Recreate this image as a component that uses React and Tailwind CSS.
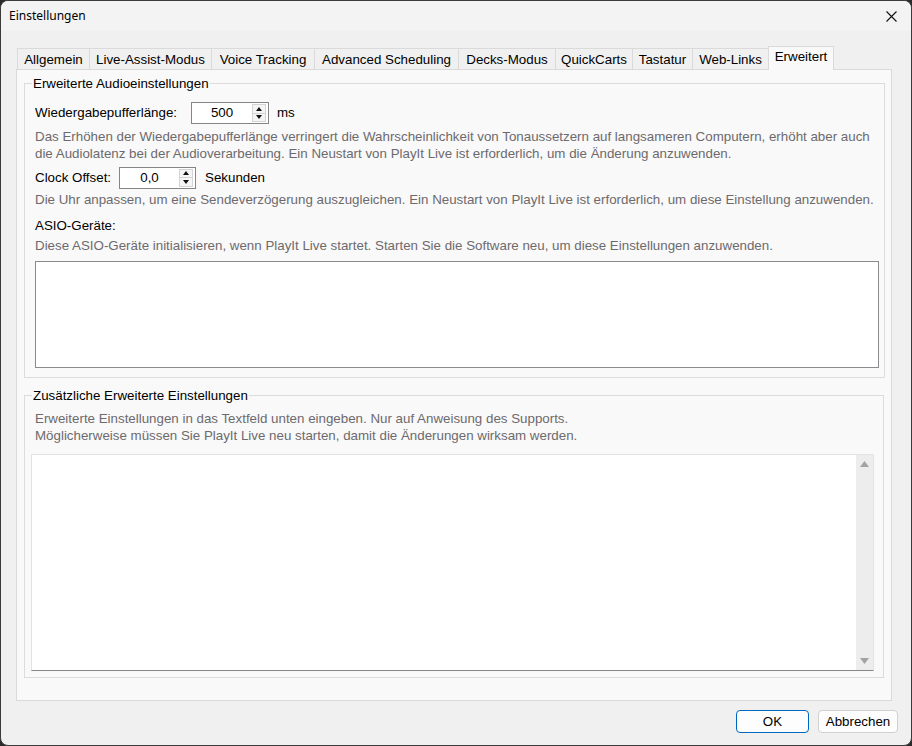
import React from "react";

const tabs = [
  { label: "Allgemein", w: "w-[73px]" },
  { label: "Live-Assist-Modus", w: "w-[123px]" },
  { label: "Voice Tracking", w: "w-[104px]" },
  { label: "Advanced Scheduling", w: "w-[145px]" },
  { label: "Decks-Modus", w: "w-[98px]" },
  { label: "QuickCarts", w: "w-[78px]" },
  { label: "Tastatur", w: "w-[61px]" },
  { label: "Web-Links", w: "w-[77px]" },
];

function SpinBox({ value, w }) {
  return (
    <div className={`${w} h-[22px] flex items-stretch border border-[#858585] bg-white`}>
      <div className="flex-1 flex items-center justify-center text-[13.33px] text-black leading-none">{value}</div>
      <div className="w-[16px] flex flex-col py-[1px] pr-[2px]">
        <div className="flex-1 flex items-center justify-center border border-[#d4d4d4] bg-[#f5f5f5]">
          <svg width="6" height="4" viewBox="0 0 6 4"><path d="M3 0 L6 4 L0 4 Z" fill="#111" /></svg>
        </div>
        <div className="flex-1 flex items-center justify-center border border-[#d4d4d4] border-t-0 bg-[#f5f5f5]">
          <svg width="6" height="4" viewBox="0 0 6 4"><path d="M0 0 L6 0 L3 4 Z" fill="#111" /></svg>
        </div>
      </div>
    </div>
  );
}

export default function App() {
  const font = { fontFamily: '"Liberation Sans", Arial, sans-serif' };
  return (
    <div className="w-[912px] h-[746px] bg-[#2b2b2b]">
      <div
        className="w-[912px] h-[746px] flex flex-col border border-[#3a3a3a] rounded-[8px] overflow-hidden bg-[#f0f0f0]"
        style={font}
      >
        {/* Title bar */}
        <div className="h-[30px] shrink-0 flex items-center justify-between bg-[#f3f3f3] pl-[8px] pr-[10px]">
          <span className="text-[12px] text-black" style={{ fontFamily: '"Noto Sans", "Open Sans", sans-serif' }}>
            Einstellungen
          </span>
          <svg width="11" height="11" viewBox="0 0 11 11" className="mr-[4px]">
            <path d="M0.5 0.5 L10.5 10.5 M10.5 0.5 L0.5 10.5" stroke="#111" strokeWidth="1.1" />
          </svg>
        </div>

        {/* Body */}
        <div className="flex-1 flex flex-col pt-[15px]">
          {/* Tabs */}
          <div className="flex items-end h-[23px] ml-[16px] relative z-10">
            {tabs.map((t, i) => (
              <div
                key={t.label}
                className={`${t.w} h-[21px] ${i > 0 ? "-ml-px" : ""} border border-b-0 border-[#dadada] bg-[#f0f0f0] flex items-center justify-center text-[13.33px] text-black whitespace-nowrap pt-[1px]`}
              >
                {t.label}
              </div>
            ))}
            <div className="w-[66px] h-[24px] -ml-px -mb-px border border-b-0 border-[#dadada] bg-[#f9f9f9] flex items-center justify-center text-[13.33px] text-black pb-[3px]">
              Erweitert
            </div>
          </div>

          {/* Panel */}
          <div className="ml-[15px] w-[876px] h-[632px] border border-[#dadada] bg-[#f9f9f9] px-[7px] pt-[6px]">
            {/* Group 1 */}
            <fieldset className="border border-[#dcdcdc] h-[302px] px-0 pb-0">
              <legend className="ml-[7px] px-[1px] text-[13.33px] leading-[15px] text-black">
                Erweiterte Audioeinstellungen
              </legend>
              <div className="pl-[10px] pr-[5px] pt-[11px] text-[13.33px] text-black">
                <div className="flex items-center h-[22px]">
                  <span className="w-[156px] whitespace-nowrap">Wiedergabepufferlänge:</span>
                  <SpinBox value="500" w="w-[78px]" />
                  <span className="ml-[8px]">ms</span>
                </div>
                <div className="mt-[4px] leading-[17px] text-[#6d6a6d] whitespace-nowrap">
                  Das Erhöhen der Wiedergabepufferlänge verringert die Wahrscheinlichkeit von Tonaussetzern auf langsameren Computern, erhöht aber auch
                  <br />
                  die Audiolatenz bei der Audioverarbeitung. Ein Neustart von PlayIt Live ist erforderlich, um die Änderung anzuwenden.
                </div>
                <div className="flex items-center h-[21px] mt-[5px]">
                  <span className="w-[84px] whitespace-nowrap">Clock Offset:</span>
                  <SpinBox value="0,0" w="w-[77px]" />
                  <span className="ml-[9px]">Sekunden</span>
                </div>
                <div className="mt-[3px] leading-[17px] text-[#6d6a6d] whitespace-nowrap">
                  Die Uhr anpassen, um eine Sendeverzögerung auszugleichen. Ein Neustart von PlayIt Live ist erforderlich, um diese Einstellung anzuwenden.
                </div>
                <div className="mt-[9px] leading-[17px]">ASIO-Geräte:</div>
                <div className="mt-[3px] leading-[17px] text-[#6d6a6d] whitespace-nowrap">
                  Diese ASIO-Geräte initialisieren, wenn PlayIt Live startet. Starten Sie die Software neu, um diese Einstellungen anzuwenden.
                </div>
                <div className="mt-[7px] w-[844px] h-[107px] border border-[#8a8a8f] bg-white" />
              </div>
            </fieldset>

            {/* Group 2 */}
            <fieldset className="mt-[10px] border border-[#dcdcdc] h-[290px] px-0 pb-0">
              <legend className="ml-[7px] px-[1px] text-[13.33px] leading-[15px] text-black">
                Zusätzliche Erweiterte Einstellungen
              </legend>
              <div className="pl-[10px] pt-[7px] text-[13.33px] leading-[17px] text-[#6d6a6d] whitespace-nowrap">
                Erweiterte Einstellungen in das Textfeld unten eingeben. Nur auf Anweisung des Supports.
                <br />
                Möglicherweise müssen Sie PlayIt Live neu starten, damit die Änderungen wirksam werden.
              </div>
              <div className="ml-[6px] mt-[10px] w-[843px] h-[217px] border border-[#e3e3e3] border-b-[#868686] bg-white flex justify-end">
                <div className="w-[17px] h-full bg-[#ededed] flex flex-col items-center justify-between py-[6px]">
                  <svg width="9" height="6" viewBox="0 0 9 6"><path d="M4.5 0 L9 6 L0 6 Z" fill="#a3a3a3" /></svg>
                  <svg width="9" height="6" viewBox="0 0 9 6"><path d="M0 0 L9 0 L4.5 6 Z" fill="#a3a3a3" /></svg>
                </div>
              </div>
            </fieldset>
          </div>

          {/* Buttons */}
          <div className="flex justify-end gap-[9px] pr-[13px] mt-[9px]">
            <button className="w-[73px] h-[23px] rounded-[4px] border border-[#0067c0] bg-[#fdfdfd] text-[13.33px] text-black flex items-center justify-center" style={font}>
              OK
            </button>
            <button className="w-[80px] h-[23px] rounded-[4px] border border-[#d0d0d0] bg-[#fdfdfd] text-[13.33px] text-black flex items-center justify-center" style={font}>
              Abbrechen
            </button>
          </div>
        </div>
      </div>
    </div>
  );
}
